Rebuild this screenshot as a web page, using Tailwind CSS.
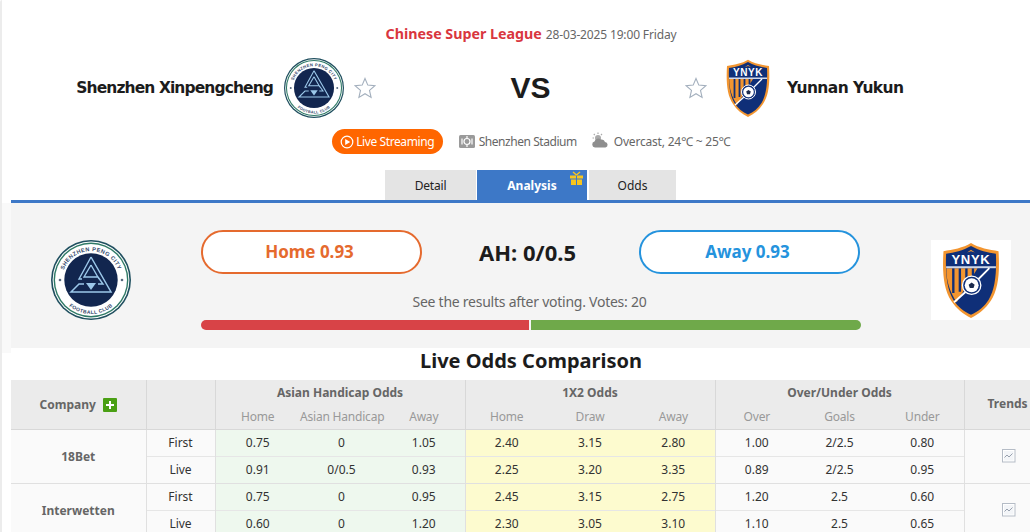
<!DOCTYPE html>
<html><head><meta charset="utf-8"><script src="https://cdn.jsdelivr.net/npm/@tailwindcss/browser@4"></script></head>
<body class="bg-white">
<svg width="0" height="0" class="absolute">
<defs>
<symbol id="club" viewBox="0 0 80 80">
<circle cx="40" cy="40" r="40" fill="#1f4f5f"/><circle cx="40" cy="40" r="38.400" fill="#fff"/><circle cx="40" cy="40" r="37.400" fill="#2f7a66"/><circle cx="40" cy="40" r="36" fill="#fff"/>
<circle cx="40" cy="40" r="26.700" fill="#12264f"/>
<defs><path id="arcT" d="M11 40a29 29 0 0 1 58 0"/><path id="arcB" d="M6 40a34 34 0 0 0 68 0"/></defs>
<text font-family="Liberation Sans" font-size="5.600" font-weight="700" fill="#33486b" letter-spacing=".45"><textPath href="#arcT" startOffset="50%" text-anchor="middle">SHENZHEN PENG CITY</textPath></text>
<text font-family="Liberation Sans" font-size="5" font-weight="700" fill="#33486b" letter-spacing=".4"><textPath href="#arcB" startOffset="50%" text-anchor="middle">FOOTBALL CLUB</textPath></text>
<circle cx="9" cy="40" r="1.300" fill="#56697f"/><circle cx="71" cy="40" r="1.300" fill="#56697f"/>
<path d="M40 17L60 52H20L28 44H33" fill="none" stroke="#9cc8ea" stroke-width="1.500"/>
<path d="M40 17L28 39H31M40 25L33 37H47L52 44H47M40 25L48 39" fill="none" stroke="#9cc8ea" stroke-width="1.400"/>
<path d="M35 43h10l-5 7z" fill="#9cc8ea"/>
</symbol>
<symbol id="crest" viewBox="0 0 44 58">
<path d="M22 .8C28 4.500 36 6 43 7c1 16 0 29-6 38-4 6-9 10-15 13C16 55 11 51 7 45 1 36 0 23 1 7c7-1 15-2.500 21-6.200z" fill="#f29530"/>
<path d="M22 3C28 6.500 35 8 41 9c.6 14-.4 27-5.500 35-3.500 5.500-8 9-13.500 11.500C16.500 53 12 49.500 8.500 44 3.400 36 2.400 23 3 9c6-1 13-2.500 19-6z" fill="#0f2f78"/>
<path d="M3.200 20H27L11 46C6 38 3 30 3.200 20z" fill="#f29530"/>
<path d="M8.500 20v19M13.500 20v18M18.500 20v12M23.500 20v6" stroke="#0f2f78" stroke-width="1.800"/>
<rect x="3" y="18.500" width="38" height="1.500" fill="#cfd8ea"/>
<path d="M19 8l3-2 3 2-3-1z" fill="#f29530"/>
<text x="22" y="17" text-anchor="middle" font-family="Liberation Sans" font-size="10" font-weight="700" letter-spacing=".5" fill="#fff">YNYK</text>
<path d="M36 20L27 29M18 38L9 46" stroke="#fff" stroke-width="1.400"/>
<circle cx="22.500" cy="33" r="7" fill="#0f2f78" stroke="#fff" stroke-width="1"/><circle cx="22.500" cy="33" r="5.300" fill="#fff"/>
<path d="M22.500 31l2.300 1.600-.9 2.600h-2.800l-.9-2.600z" fill="#1b2a4d"/>
</symbol>
<symbol id="star" viewBox="0 0 22 22">
<path d="M11 1.500l2.800 6.600 7.100.6-5.400 4.700 1.600 7L11 16.700l-6.100 3.700 1.600-7L1.100 8.700l7.100-.6z" fill="#fff" stroke="#a3afbd" stroke-width="1.100"/>
</symbol>
<symbol id="trend" viewBox="0 0 14 14">
<rect x=".5" y=".5" width="12.500" height="12.500" fill="#fff" stroke="#b5bcc6"/><rect x="2" y="2" width="9.500" height="9.500" fill="#f3f5f8"/>
<path d="M2.500 8.500L5 6l2 2 3.500-3.500" fill="none" stroke="#8d97a5" stroke-width=".9"/>
</symbol>
</defs>
</svg>
<div class="relative w-[1030px] h-[532px] overflow-hidden font-['Noto_Sans',sans-serif] bg-white">
  <div class="absolute left-0 top-0 bottom-0 w-[2px] bg-[#ececec] rounded-tl"></div>
  <div class="absolute left-[2px] top-[203px] h-[150px] w-[9px] bg-[#f9f9f9]"></div>
  <main class="ml-[11px] w-[1040px]">
    <header class="h-[203px] border-b-[3px] border-[#3d78c7] flex flex-col">
      <div class="mt-[25px] h-[20px] flex items-center justify-center gap-[4px]">
        <span class="font-bold text-[14.250px] leading-[20px] mb-[2px] text-[#d9363e]">Chinese Super League</span>
        <span class="text-[12px] tracking-[-0.15px] text-[#666]">28-03-2025 19:00 Friday</span>
      </div>
      <div class="mt-[13px] h-[60px] grid grid-cols-[365px_310px_365px] items-center">
        <div class="flex items-center justify-end">
          <span class="font-bold text-[15.500px] mt-[2px] text-[#1c1c1c] font-['DejaVu_Sans',sans-serif] tracking-[-0.9px] mr-[11px]">Shenzhen Xinpengcheng</span>
          <svg class="w-[60px] h-[60px]"><use href="#club"/></svg>
          <svg class="w-[22px] h-[22px] ml-[10px]"><use href="#star"/></svg>
        </div>
        <div class="text-center font-bold text-[30px] leading-none text-[#1c1c1c] font-['Liberation_Sans',sans-serif] pr-[1px]">VS</div>
        <div class="flex items-center">
          <svg class="w-[22px] h-[22px] -ml-[1px]"><use href="#star"/></svg>
          <svg class="w-[44px] h-[58px] ml-[19px]"><use href="#crest"/></svg>
          <span class="font-bold text-[15.500px] mt-[2px] text-[#1c1c1c] font-['DejaVu_Sans',sans-serif] tracking-[-0.6px] ml-[17px]">Yunnan Yukun</span>
        </div>
      </div>
      <div class="mt-[11px] h-[25px] flex items-center justify-center text-[12px] text-[#666]">
        <a class="w-[111px] h-[25px] rounded-full bg-[#ff6600] text-white tracking-[-0.4px] flex items-center justify-center gap-[2px]">
          <svg class="w-[14px] h-[14px]" viewBox="0 0 14 14"><circle cx="7" cy="7" r="5.800" fill="none" stroke="#fff" stroke-width="1.200"/><path d="M5.200 4l5 3-5 3z" fill="#fff"/></svg>
          <span>Live Streaming</span>
        </a>
        <svg class="w-[16px] h-[13px] ml-[16px]" viewBox="0 0 16 13"><rect width="16" height="13" rx="1.500" fill="#9a9a9a"/><circle cx="8" cy="6.500" r="3" fill="none" stroke="#fff" stroke-width="1.200"/><path d="M3 3.500v6M13 3.500v6M8 1v2M8 10v2" stroke="#fff" stroke-width="1.200"/></svg>
        <span class="ml-[4px] tracking-[-0.45px]">Shenzhen Stadium</span>
        <svg class="w-[18px] h-[16px] ml-[14px] -mt-[4px]" viewBox="0 0 18 16"><circle cx="7" cy="6" r="3" fill="#aaa"/><path d="M7 .5v1.500M1.500 6H3M2.800 2l1 1M11 2l-1 1" stroke="#aaa" stroke-width="1.200"/><path d="M4 15.500a3 3 0 0 1-.5-5.900A4 4 0 0 1 10 7.500a3.500 3.500 0 0 1 4 2.500 2.800 2.800 0 0 1 .5 5.500z" fill="#8e8e8e"/></svg>
        <span class="ml-[5px] tracking-[-0.2px]">Overcast, 24℃ ~ 25℃</span>
      </div>
      <nav class="mt-auto flex justify-center gap-[1px] text-[12px] h-[30px] -ml-[1px]">
        <a class="w-[91px] bg-[#e4e4e4] text-[#222] tracking-[-0.2px] pt-[1px] flex items-center justify-center">Detail</a>
        <a class="relative w-[110px] bg-[#3d78c7] text-white font-bold pt-[1px] flex items-center justify-center">Analysis
          <svg class="absolute right-[3px] top-[1px] w-[15px] h-[15px]" viewBox="0 0 15 15"><path d="M1 4.500h13v3H1zM2 8.500h11V14H2z" fill="#f7c51e"/><path d="M7 4.500v9.500h1V4.500z" fill="#3d78c7"/><path d="M7.500 4L4 1M7.500 4L11 1" stroke="#f7c51e" stroke-width="1.500"/></svg>
        </a>
        <a class="w-[87px] ml-[1px] bg-[#e4e4e4] text-[#222] pt-[1px] flex items-center justify-center">Odds</a>
      </nav>
    </header>

    <section class="h-[145px] bg-[#f4f4f4] flex items-start pl-[40px] pt-[27px]">
      <svg class="w-[80px] h-[80px] mt-[10px] shrink-0"><use href="#club"/></svg>
      <div class="ml-[70px] w-[660px] shrink-0">
        <div class="flex items-center">
          <button class="w-[221px] h-[44px] rounded-full border-2 border-[#e56a2e] bg-white text-[#e56a2e] font-bold text-[17px] pr-[4px]">Home 0.93</button>
          <div class="w-[217px] text-center font-bold text-[22px] text-[#1c1c1c] -ml-[3px]">AH: 0/0.5</div>
          <button class="ml-[3px] w-[221px] h-[44px] rounded-full border-2 border-[#2593dd] bg-white text-[#2593dd] font-bold text-[17px] pr-[4px]">Away 0.93</button>
        </div>
        <p class="mt-[18px] text-center text-[14px] tracking-[-0.25px] leading-[20px] text-[#666] -ml-[3px]">See the results after voting. Votes: 20</p>
        <div class="mt-[8px] flex h-[10px] gap-[2px]">
          <div class="w-[328px] bg-[#d84347] rounded-l-full"></div>
          <div class="w-[330px] bg-[#6fa94a] rounded-r-full"></div>
        </div>
      </div>
      <div class="ml-[70px] mt-[10px] w-[80px] h-[80px] bg-white shrink-0 flex items-center justify-center">
        <svg class="w-[60px] h-[76px]"><use href="#crest"/></svg>
      </div>
    </section>

    <h2 class="h-[32px] leading-[26px] text-center font-bold text-[20px] text-[#1c1c1c]">Live Odds Comparison</h2>

    <table class="w-[1040px] table-fixed border-collapse text-[12px] text-[#333] text-center whitespace-nowrap">
      <colgroup><col class="w-[135px]"><col class="w-[69px]"><col class="w-[85px]"><col class="w-[83px]"><col class="w-[82px]"><col class="w-[83px]"><col class="w-[84px]"><col class="w-[83px]"><col class="w-[83px]"><col class="w-[83px]"><col class="w-[83px]"><col class="w-[87px]"></colgroup>
      <thead class="bg-[#ebebeb] text-[#666]">
        <tr class="h-[25px]">
          <th rowspan="2" class="border-r border-b border-[#d8d8d8] font-bold pt-[2px]"><span class="inline-flex items-center gap-[7px]">Company <span class="w-[14px] h-[14px] bg-[#4a9f14] rounded-[1px] text-white flex items-center justify-center"><svg class="w-[10px] h-[10px]" viewBox="0 0 10 10"><path d="M5 1v8M1 5h8" stroke="#fff" stroke-width="2"/></svg></span></span></th>
          <th rowspan="2" class="border-r border-b border-[#d8d8d8]"></th>
          <th colspan="3" class="border-r border-[#d8d8d8] font-bold">Asian Handicap Odds</th>
          <th colspan="3" class="border-r border-[#d8d8d8] font-bold">1X2 Odds</th>
          <th colspan="3" class="border-r border-[#d8d8d8] font-bold">Over/Under Odds</th>
          <th rowspan="2" class="border-b border-[#d8d8d8] font-bold text-left pl-[23px]">Trends</th>
        </tr>
        <tr class="h-[24px] font-normal text-[#999] border-b border-[#d8d8d8] tracking-[-0.2px]">
          <td class="leading-[20px]">Home</td><td class="leading-[20px]">Asian Handicap</td><td class="leading-[20px] border-r border-[#d8d8d8]">Away</td>
          <td class="leading-[20px]">Home</td><td class="leading-[20px]">Draw</td><td class="leading-[20px] border-r border-[#d8d8d8]">Away</td>
          <td class="leading-[20px]">Over</td><td class="leading-[20px]">Goals</td><td class="leading-[20px] border-r border-[#d8d8d8]">Under</td>
        </tr>
      </thead>
      <tbody>
        <tr class="h-[27px] border-b border-[#e6e6e6]">
          <td rowspan="2" class="bg-[#fafafa] border-r border-[#e0e0e0] font-bold text-[#666] pt-[2px]">18Bet</td>
          <td class="bg-[#fafafa] border-r border-[#e0e0e0]">First</td>
          <td class="bg-[#eef8ee]">0.75</td><td class="bg-[#eef8ee]">0</td><td class="bg-[#eef8ee] border-r border-[#e0e0e0]">1.05</td>
          <td class="bg-[#fdfbcf]">2.40</td><td class="bg-[#fdfbcf]">3.15</td><td class="bg-[#fdfbcf] border-r border-[#e0e0e0]">2.80</td>
          <td class="bg-[#fafafa]">1.00</td><td class="bg-[#fafafa]">2/2.5</td><td class="bg-[#fafafa] border-r border-[#e0e0e0]">0.80</td>
          <td rowspan="2" class="bg-[#fafafa] text-left pl-[37px]"><svg class="w-[14px] h-[14px]"><use href="#trend"/></svg></td>
        </tr>
        <tr class="h-[27px] border-b border-[#e0e0e0]">
          <td class="bg-[#fafafa] border-r border-[#e0e0e0]">Live</td>
          <td class="bg-[#eef8ee]">0.91</td><td class="bg-[#eef8ee]">0/0.5</td><td class="bg-[#eef8ee] border-r border-[#e0e0e0]">0.93</td>
          <td class="bg-[#fdfbcf]">2.25</td><td class="bg-[#fdfbcf]">3.20</td><td class="bg-[#fdfbcf] border-r border-[#e0e0e0]">3.35</td>
          <td class="bg-[#fafafa]">0.89</td><td class="bg-[#fafafa]">2/2.5</td><td class="bg-[#fafafa] border-r border-[#e0e0e0]">0.95</td>
        </tr>
        <tr class="h-[27px] border-b border-[#e6e6e6]">
          <td rowspan="2" class="bg-[#fafafa] border-r border-[#e0e0e0] font-bold text-[#666] pt-[2px]">Interwetten</td>
          <td class="bg-[#fafafa] border-r border-[#e0e0e0]">First</td>
          <td class="bg-[#eef8ee]">0.75</td><td class="bg-[#eef8ee]">0</td><td class="bg-[#eef8ee] border-r border-[#e0e0e0]">0.95</td>
          <td class="bg-[#fdfbcf]">2.45</td><td class="bg-[#fdfbcf]">3.15</td><td class="bg-[#fdfbcf] border-r border-[#e0e0e0]">2.75</td>
          <td class="bg-[#fafafa]">1.20</td><td class="bg-[#fafafa]">2.5</td><td class="bg-[#fafafa] border-r border-[#e0e0e0]">0.60</td>
          <td rowspan="2" class="bg-[#fafafa] text-left pl-[37px]"><svg class="w-[14px] h-[14px]"><use href="#trend"/></svg></td>
        </tr>
        <tr class="h-[27px]">
          <td class="bg-[#fafafa] border-r border-[#e0e0e0]">Live</td>
          <td class="bg-[#eef8ee]">0.60</td><td class="bg-[#eef8ee]">0</td><td class="bg-[#eef8ee] border-r border-[#e0e0e0]">1.20</td>
          <td class="bg-[#fdfbcf]">2.30</td><td class="bg-[#fdfbcf]">3.05</td><td class="bg-[#fdfbcf] border-r border-[#e0e0e0]">3.10</td>
          <td class="bg-[#fafafa]">1.10</td><td class="bg-[#fafafa]">2.5</td><td class="bg-[#fafafa] border-r border-[#e0e0e0]">0.65</td>
        </tr>
      </tbody>
    </table>
  </main>
</div>
</body></html>
